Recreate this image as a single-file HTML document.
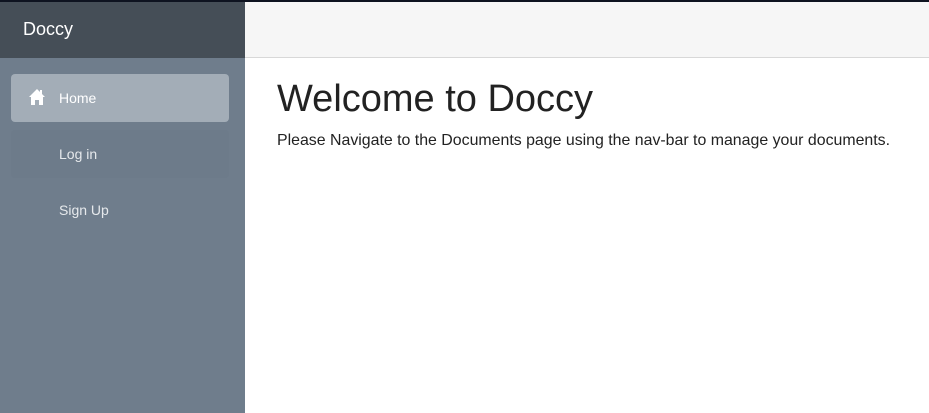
<!DOCTYPE html>
<html><head><style>
*{margin:0;padding:0;box-sizing:border-box}
body{width:929px;height:413px;overflow:hidden;font-family:"Liberation Sans",Arial,sans-serif;background:#fff;position:relative}
.top{position:absolute;left:0;top:0;width:929px;height:2px;background:#0e1320}
.sh{position:absolute;left:0;top:2px;width:245px;height:56px;background:#454e57;color:#fff;font-size:18px;padding:17px 0 0 23px}
.sb{position:absolute;left:0;top:58px;width:245px;height:355px;background:#6f7d8c}
.tb{position:absolute;left:245px;top:2px;right:0;height:56px;background:#f6f6f6;border-bottom:1px solid #d8d8d8}
.it{position:absolute;left:11px;width:218px;height:48px;border-radius:4px;color:#e6e9ec;font-size:14px;padding:16px 0 0 48px}
.home{top:74px;background:#a3adb7;color:#fff}
.login{top:130px;background:#6d7b8a}
.signup{top:186px}
h1{position:absolute;left:277px;top:78px;font-size:38px;font-weight:normal;color:#222}
p{position:absolute;left:277px;top:132px;font-size:15.9px;color:#222}
</style></head><body>
<div class="top"></div>
<div class="sh">Doccy</div>
<div class="sb"></div>
<div class="tb"></div>
<div class="it home"><svg style="position:absolute;left:17px;top:14px" width="18" height="18" viewBox="0 0 18 18"><path d="M9 1L1 9h2v8h4v-5h4v5h4V9h2L14 6V2h-2v2z" fill="#fff"/></svg>Home</div>
<div class="it login">Log in</div>
<div class="it signup">Sign Up</div>
<h1>Welcome to Doccy</h1>
<p>Please Navigate to the Documents page using the nav-bar to manage your documents.</p>
</body></html>
